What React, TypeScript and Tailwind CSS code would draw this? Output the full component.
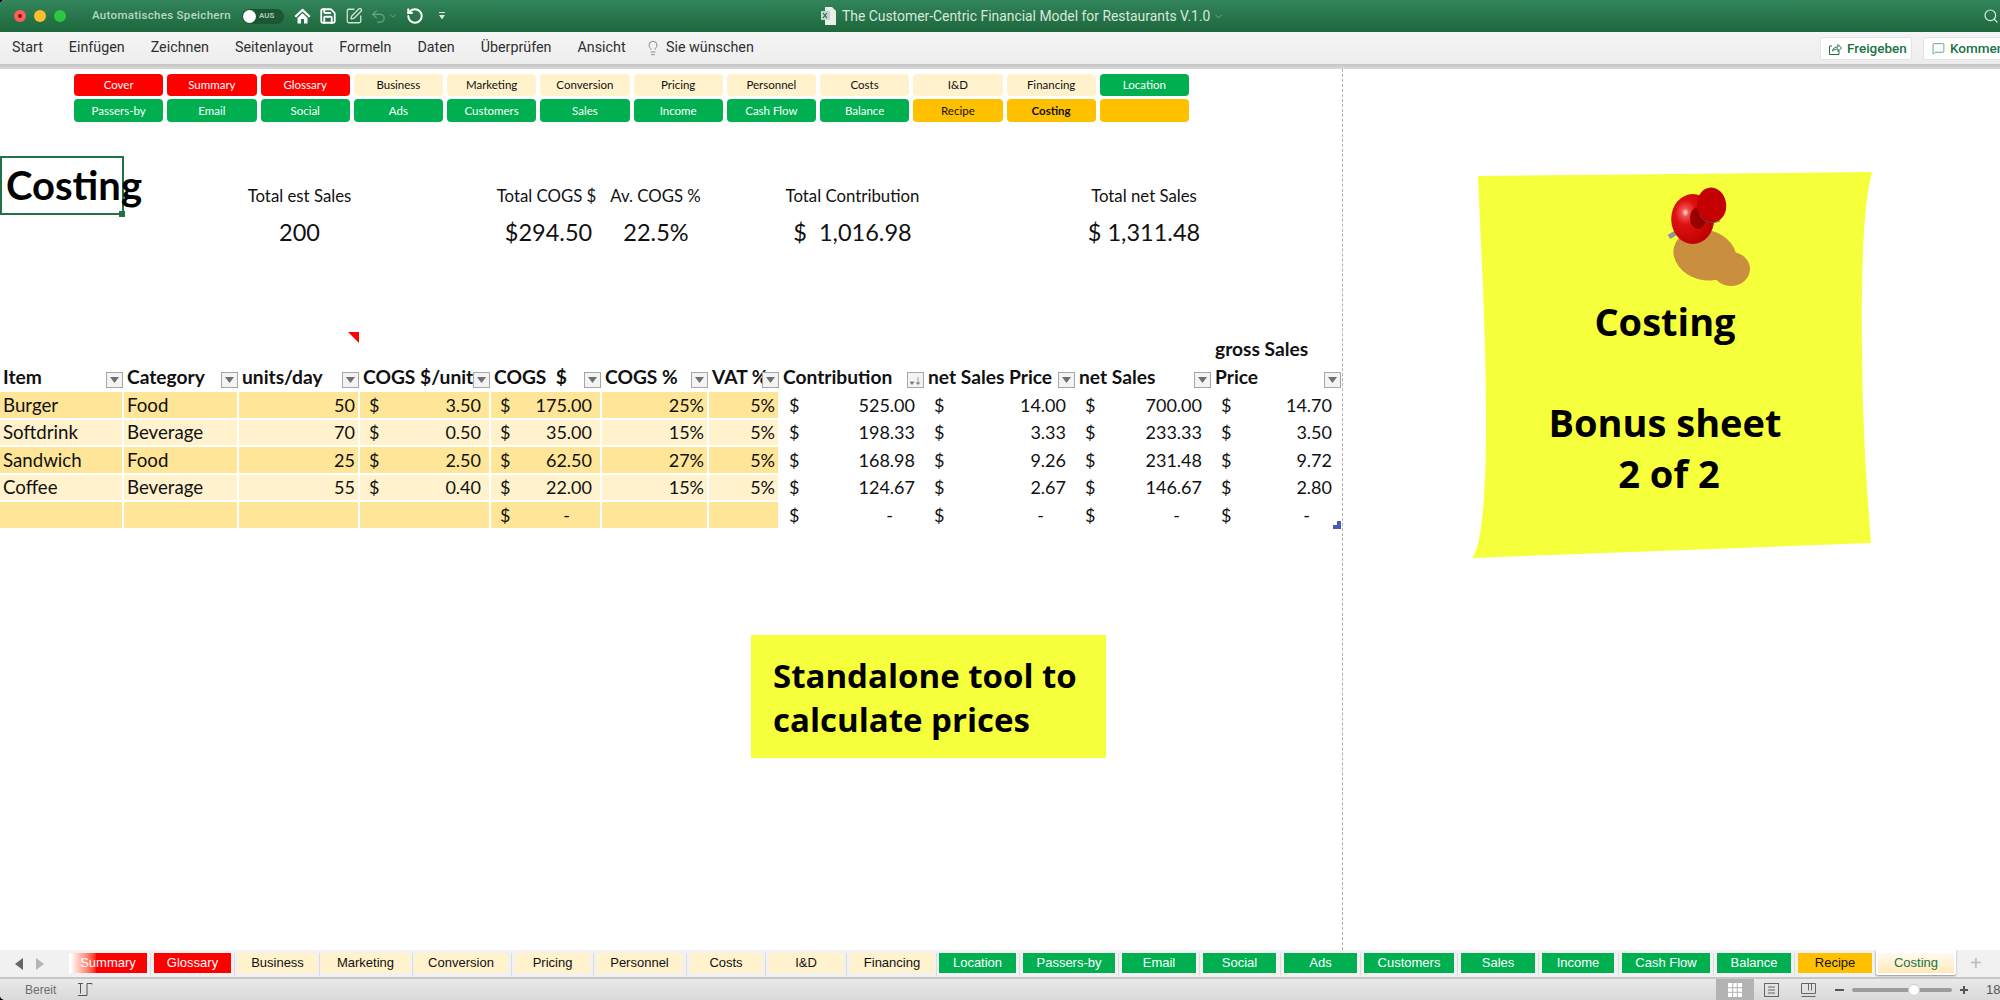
import React from "react";
import { Save, SquarePen, Undo2, RotateCcw, ChevronDown, Lightbulb, Search, MessageSquare } from "lucide-react";

const cols = "grid grid-cols-[124px_115px_121px_131px_111px_107px_71px_145px_151px_136px_130px]";

type Nav = { t: string; c: string };
const navCls = {
  red: "bg-[#ff0000] text-white",
  cream: "bg-[#fff2cc] text-[#111]",
  green: "bg-[#00b050] text-white",
  orange: "bg-[#ffc000] text-[#111]",
};
const nav: Nav[] = [
  { t: "Cover", c: navCls.red }, { t: "Summary", c: navCls.red }, { t: "Glossary", c: navCls.red },
  { t: "Business", c: navCls.cream }, { t: "Marketing", c: navCls.cream }, { t: "Conversion", c: navCls.cream },
  { t: "Pricing", c: navCls.cream }, { t: "Personnel", c: navCls.cream }, { t: "Costs", c: navCls.cream },
  { t: "I&D", c: navCls.cream }, { t: "Financing", c: navCls.cream }, { t: "Location", c: navCls.green },
  { t: "Passers-by", c: navCls.green }, { t: "Email", c: navCls.green }, { t: "Social", c: navCls.green },
  { t: "Ads", c: navCls.green }, { t: "Customers", c: navCls.green }, { t: "Sales", c: navCls.green },
  { t: "Income", c: navCls.green }, { t: "Cash Flow", c: navCls.green }, { t: "Balance", c: navCls.green },
  { t: "Recipe", c: navCls.orange }, { t: "Costing", c: navCls.orange + " font-bold" }, { t: "", c: navCls.orange },
];

const menu = ["Start", "Einfügen", "Zeichnen", "Seitenlayout", "Formeln", "Daten", "Überprüfen", "Ansicht"];

function FilterBtn({ sorted }: { sorted?: boolean }) {
  return (
    <div className="absolute right-px bottom-[4px] flex h-[16px] w-[17px] items-center justify-center border border-[#a6a6a6] bg-[#f3f3f3]">
      {sorted ? (
        <svg width="11" height="9" viewBox="0 0 11 9"><path d="M0 6h4L2 8.5zM8 1v7M6 6.5 8 8.5l2-2" fill="#777" stroke="#777" strokeWidth="0.7" /></svg>
      ) : (
        <svg width="9" height="6" viewBox="0 0 9 6"><path d="M0 0h9L4.5 6z" fill="#6f6f6f" /></svg>
      )}
    </div>
  );
}

const headers = ["Item", "Category", "units/day", "COGS $/unit", "COGS  $", "COGS %", "VAT %", "Contribution", "net Sales Price", "net Sales", "gross Sales Price"];

function Header() {
  return (
    <div className={cols + " h-[54px] grid-rows-[54px] text-[19.2px] font-bold leading-[27.5px] text-[#111]"}>
      {headers.map((h, i) => (
        <div key={h} className="relative flex items-end pb-[2px] pl-[3px]">
          {i === 2 && (
            <svg className="absolute right-px top-[-6px]" width="11" height="11" viewBox="0 0 11 11"><path d="M0 0h11v11z" fill="#ff0000" /></svg>
          )}
          <span className={i === 10 ? "w-[100px]" : "whitespace-pre"}>{h}</span>
          <FilterBtn sorted={i === 7} />
        </div>
      ))}
    </div>
  );
}

type Row = { item: string; cat: string; units: string; unit: string; cogs: string; pct: string; vat: string; con: string; price: string; net: string; gross: string };
const rows: Row[] = [
  { item: "Burger", cat: "Food", units: "50", unit: "3.50", cogs: "175.00", pct: "25%", vat: "5%", con: "525.00", price: "14.00", net: "700.00", gross: "14.70" },
  { item: "Softdrink", cat: "Beverage", units: "70", unit: "0.50", cogs: "35.00", pct: "15%", vat: "5%", con: "198.33", price: "3.33", net: "233.33", gross: "3.50" },
  { item: "Sandwich", cat: "Food", units: "25", unit: "2.50", cogs: "62.50", pct: "27%", vat: "5%", con: "168.98", price: "9.26", net: "231.48", gross: "9.72" },
  { item: "Coffee", cat: "Beverage", units: "55", unit: "0.40", cogs: "22.00", pct: "15%", vat: "5%", con: "124.67", price: "2.67", net: "146.67", gross: "2.80" },
];

function Money({ v, bg }: { v: string; bg?: string }) {
  return (
    <div className={"flex items-center justify-between border-b-2 border-r-2 border-white pl-[9px] pr-[8px] text-[18px] leading-[24px] " + (bg ?? "")}>
      <span>$</span>
      <span>{v}</span>
    </div>
  );
}
function Dash({ bg }: { bg?: string }) {
  return (
    <div className={"flex items-center justify-between border-b-2 border-r-2 border-white pl-[9px] pr-[30px] text-[18px] leading-[24px] " + (bg ?? "")}>
      <span>$</span>
      <span>-</span>
    </div>
  );
}
function Txt({ v, bg, right }: { v: string; bg: string; right?: boolean }) {
  return (
    <div className={"flex items-center border-b-2 border-r-2 border-white leading-[24px] " + (right ? "justify-end pr-[3px] text-[18px] " : "pl-[3px] text-[18.7px] ") + bg}>
      {v}
    </div>
  );
}

function Note() {
  return (
    <div className="relative ml-[129px] mt-[103px] h-[386px] w-[400px] shrink-0">
      <svg className="absolute inset-0" width="400" height="386" viewBox="0 0 400 386">
        <path d="M6 4 L400 0 C392 30 389 90 390 180 C391 270 396 330 399 371 L0 386 C10 375 14 320 14 250 C14 150 8 60 6 4 Z" fill="#f6ff3b" />
      </svg>
      <svg className="absolute left-[178px] top-[3px]" width="110" height="125" viewBox="0 0 110 125">
        <defs>
          <radialGradient id="pinhead" cx="0.33" cy="0.37" r="0.7">
            <stop offset="0" stopColor="#ffe0e0" />
            <stop offset="0.12" stopColor="#f05050" />
            <stop offset="0.35" stopColor="#df1010" />
            <stop offset="1" stopColor="#bb0000" />
          </radialGradient>
        </defs>
        <ellipse cx="55" cy="80" rx="32" ry="25" fill="#c98f3e" transform="rotate(15 55 80)" />
        <ellipse cx="81" cy="94" rx="19" ry="17" fill="#c98f3e" />
        <path d="M19 62 L27 57" stroke="#8c96a0" strokeWidth="5" />
        <ellipse cx="42.7" cy="44" rx="21.5" ry="25" fill="url(#pinhead)" />
        <ellipse cx="48" cy="43" rx="8" ry="11" fill="#9a0000" />
        <ellipse cx="61.7" cy="30" rx="14.5" ry="17.5" fill="#c40000" transform="rotate(-8 61.7 30)" />
        <path d="M50 40 C54 48 62 49 70 46" stroke="#555" strokeWidth="0.8" fill="none" />
      </svg>
      <div className="relative pr-[14px] pt-[124px] text-center font-['Open_Sans',sans-serif] text-[38px] font-bold leading-[50.5px] text-black">
        <div>Costing</div>
        <div className="h-[50.5px]" />
        <div>Bonus sheet</div>
        <div className="pl-[8px]">2 of 2</div>
      </div>
    </div>
  );
}

type Tab = { t: string; cell: string; chip: string; c: string };
const tred = "bg-[#ff0000] text-white";
const tcream = "bg-[#fff2cc] text-[#111]";
const tgreen = "bg-[#00b050] text-white";
const tabs: Tab[] = [
  { t: "Summary", cell: "w-[85px]", chip: "w-[78px]", c: "bg-linear-to-r from-[#ffffff] from-[2%] to-[#ff0000] to-[35%] text-white" },
  { t: "Glossary", cell: "w-[84px]", chip: "w-[77px]", c: tred },
  { t: "Business", cell: "w-[83px]", chip: "w-[79px]", c: tcream },
  { t: "Marketing", cell: "w-[93px]", chip: "w-[89px]", c: tcream },
  { t: "Conversion", cell: "w-[101px]", chip: "w-[94px]", c: tcream },
  { t: "Pricing", cell: "w-[82px]", chip: "w-[75px]", c: tcream },
  { t: "Personnel", cell: "w-[93px]", chip: "w-[85px]", c: tcream },
  { t: "Costs", cell: "w-[79px]", chip: "w-[72px]", c: tcream },
  { t: "I&D", cell: "w-[81px]", chip: "w-[74px]", c: tcream },
  { t: "Financing", cell: "w-[89px]", chip: "w-[84px]", c: tcream },
  { t: "Location", cell: "w-[84px]", chip: "w-[77px]", c: tgreen },
  { t: "Passers-by", cell: "w-[99px]", chip: "w-[92px]", c: tgreen },
  { t: "Email", cell: "w-[81px]", chip: "w-[74px]", c: tgreen },
  { t: "Social", cell: "w-[81px]", chip: "w-[73px]", c: tgreen },
  { t: "Ads", cell: "w-[80px]", chip: "w-[73px]", c: tgreen },
  { t: "Customers", cell: "w-[97px]", chip: "w-[90px]", c: tgreen },
  { t: "Sales", cell: "w-[81px]", chip: "w-[74px]", c: tgreen },
  { t: "Income", cell: "w-[80px]", chip: "w-[72px]", c: tgreen },
  { t: "Cash Flow", cell: "w-[95px]", chip: "w-[88px]", c: tgreen },
  { t: "Balance", cell: "w-[81px]", chip: "w-[74px]", c: tgreen },
  { t: "Recipe", cell: "w-[80px]", chip: "w-[74px]", c: "bg-[#ffc000] text-[#111]" },
];

export default function App() {
  const yellowA = "bg-[#ffe598]";
  const yellowB = "bg-[#fff2cc]";
  return (
    <div className="h-[1000px] w-[2000px] overflow-hidden bg-black">
      <div className="flex h-full w-full flex-col overflow-hidden rounded-l-[5px] bg-white">
        {/* title bar */}
        <div className="relative flex h-[32px] shrink-0 items-center bg-linear-to-b from-[#32855b] to-[#1e673c] pl-[14px] font-['Roboto',sans-serif]">
          <div className="flex items-center gap-[8px]">
            <div className="flex h-[12px] w-[12px] items-center justify-center rounded-full bg-[#fb5f57]"><div className="h-[4px] w-[4px] rounded-full bg-[#7e1a14]" /></div>
            <div className="h-[12px] w-[12px] rounded-full bg-[#fdbb2e]" />
            <div className="h-[12px] w-[12px] rounded-full bg-[#2ac83f]" />
          </div>
          <span className="ml-[26px] w-[140px] whitespace-nowrap text-[11.5px] font-medium tracking-[0.3px] text-[#b9d6c5]">Automatisches Speichern</span>
          <div className="ml-[10px] flex h-[15px] w-[42px] items-center rounded-full bg-[#1b5733] pl-px">
            <div className="h-[13px] w-[13px] rounded-full bg-white" />
            <span className="ml-[3px] text-[8px] font-bold text-[#a9c9b6]">AUS</span>
          </div>
          <svg className="ml-[10px]" width="17" height="16" viewBox="0 0 17 16"><path d="M8.5 0.5 L0.5 8 L2 9.5 L8.5 3.4 L15 9.5 L16.5 8 Z M3.5 10 L8.5 5.3 L13.5 10 V15.5 H10 V11 H7 V15.5 H3.5 Z" fill="#fff" /></svg>
          <Save className="ml-[8px] text-white" size={18} strokeWidth={2.4} />
          <SquarePen className="ml-[8px] text-[#d6e5dc]" size={18} strokeWidth={1.7} />
          <Undo2 className="ml-[7px] text-[#6fa487]" size={17} strokeWidth={1.7} />
          <ChevronDown className="ml-[1px] text-[#6fa487]" size={10} />
          <RotateCcw className="ml-[8px] text-white" size={18} strokeWidth={2.6} />
          <svg className="ml-[15px]" width="6" height="8" viewBox="0 0 6 8"><path d="M0 0.5h6" stroke="#d9e7de" strokeWidth="1.2" /><path d="M0 3h6L3 7.5z" fill="#d9e7de" /></svg>
          <div className="absolute left-[821px] top-0 flex h-full items-center">
            <svg width="15" height="18" viewBox="0 0 15 18"><path d="M4 0h7l4 4v14H4z" fill="#e8efe9" /><rect x="0" y="4" width="9" height="9" fill="#c3d6ca" /><path d="M2 6l4 5M6 6l-4 5" stroke="#1e673c" strokeWidth="1.1" /></svg>
            <span className="ml-[6px] whitespace-nowrap text-[13.9px] text-[#d8e7de]">The Customer-Centric Financial Model for Restaurants V.1.0</span>
            <ChevronDown className="ml-[3px] text-[#7fae94]" size={11} />
          </div>
          <Search className="absolute left-[1983px] top-[8px] text-[#dfeae3]" size={16} strokeWidth={1.8} />
        </div>
        {/* ribbon */}
        <div className="flex h-[32px] shrink-0 items-center overflow-hidden bg-linear-to-b from-[#f5f5f5] to-[#ededed] pl-[12px] font-['Roboto',sans-serif] text-[14.3px] text-[#2f2f2f]">
          <div className="flex w-[614px] shrink-0 items-center gap-[26px]">
            {menu.map((m) => (
              <span key={m} className="whitespace-nowrap">{m}</span>
            ))}
          </div>
          <Lightbulb className="ml-[19px] shrink-0 text-[#666]" size={16} strokeWidth={1.1} />
          <span className="ml-[5px] whitespace-nowrap">Sie wünschen</span>
          <div className="ml-auto flex h-[23px] w-[92px] shrink-0 items-center rounded-[2px] border border-[#e3e3e3] bg-white pl-[8px] text-[13.5px] font-medium text-[#217346]">
            <svg width="13" height="13" viewBox="0 0 13 13" fill="none" stroke="#217346" strokeWidth="1"><path d="M3 4H0.5v8.5H10V9" /><path d="M3.5 9C4 6 6 5 9 5V2.5L12.5 6 9 9.5V7C7 7 5 7.5 3.5 9Z" /></svg>
            <span className="ml-[5px]">Freigeben</span>
          </div>
          <div className="ml-[11px] flex h-[23px] w-[77px] shrink-0 items-center overflow-hidden rounded-l-[2px] border border-r-0 border-[#e3e3e3] bg-white pl-[8px] text-[13.5px] font-medium text-[#217346]">
            <MessageSquare className="shrink-0" size={13} strokeWidth={1.2} />
            <span className="ml-[5px] whitespace-nowrap">Kommen</span>
          </div>
        </div>
        <div className="h-[5px] shrink-0 bg-linear-to-b from-[#c4c4c4] to-[#d9d9d9]" />

        {/* sheet */}
        <div className="flex min-h-0 flex-1 bg-white">
          <div className="w-[1343px] shrink-0 border-r border-dashed border-[#b0b0b0] font-['Lato',sans-serif] text-[#111]">
            <div className="grid grid-cols-[repeat(12,89.25px)] grid-rows-[22px_23px] gap-x-[4px] gap-y-[3px] pl-[74px] pt-[5px] text-[11.5px]">
              {nav.map((n, i) => (
                <div key={i} className={"flex items-center justify-center rounded-[4px] " + n.c}>{n.t}</div>
              ))}
            </div>
            <div className={cols + " mt-[34px] grid-rows-[51px_52px] text-[16.8px]"}>
              <div className="relative row-span-2 h-[59px] border-2 border-[#217346]">
                <span className="absolute left-[4px] top-[2px] whitespace-nowrap text-[40px] font-bold leading-[50px] text-black">Costing</span>
                <div className="absolute -bottom-[4px] -right-[3px] h-[6px] w-[6px] bg-[#217346]" />
              </div>
              <div />
              <div className="flex items-end justify-center whitespace-nowrap leading-[22px]">Total est Sales</div>
              <div />
              <div className="flex items-end justify-center whitespace-nowrap leading-[22px]">Total COGS $</div>
              <div className="flex items-end justify-center whitespace-nowrap leading-[22px]">Av. COGS %</div>
              <div />
              <div className="flex items-end justify-center whitespace-nowrap leading-[22px]">Total Contribution</div>
              <div />
              <div className="flex items-end justify-center whitespace-nowrap leading-[22px]">Total net Sales</div>
              <div />
              <div />
              <div className="flex items-center justify-center text-[23.5px]">200</div>
              <div />
              <div className="flex items-center justify-center whitespace-nowrap pl-[4px] text-[23.5px]">$294.50</div>
              <div className="flex items-center justify-center whitespace-nowrap pl-[1px] text-[23.5px]">22.5%</div>
              <div />
              <div className="flex items-center justify-center whitespace-pre text-[23.5px]">{"$  1,016.98"}</div>
              <div />
              <div className="flex items-center justify-center whitespace-nowrap text-[23.5px]">$ 1,311.48</div>
              <div />
            </div>
            <div className="mt-[79px]">
              <Header />
              <div className="text-[#111]">
                {rows.map((r, i) => {
                  const bg = i % 2 === 0 ? yellowA : yellowB;
                  return (
                    <div key={r.item} className={cols + " h-[27.5px]"}>
                      <Txt v={r.item} bg={bg} />
                      <Txt v={r.cat} bg={bg} />
                      <Txt v={r.units} bg={bg} right />
                      <Money v={r.unit} bg={bg} />
                      <Money v={r.cogs} bg={bg} />
                      <Txt v={r.pct} bg={bg + " pr-[2px]"} right />
                      <Txt v={r.vat} bg={bg + " pr-[2px]"} right />
                      <Money v={r.con} />
                      <Money v={r.price} />
                      <Money v={r.net} />
                      <Money v={r.gross} />
                    </div>
                  );
                })}
                <div className={cols + " relative h-[27.5px]"}>
                  <Txt v="" bg={yellowA} />
                  <Txt v="" bg={yellowA} />
                  <Txt v="" bg={yellowA} />
                  <Txt v="" bg={yellowA} />
                  <Dash bg={yellowA} />
                  <Txt v="" bg={yellowA} />
                  <Txt v="" bg={yellowA} />
                  <Dash />
                  <Dash />
                  <Dash />
                  <Dash />
                  <svg className="absolute bottom-[1px] right-[1px]" width="8" height="8" viewBox="0 0 8 8"><path d="M8 0v8H0V4h4V0z" fill="#4a5cb5" /></svg>
                </div>
              </div>
            </div>
            <div className="ml-[751px] mt-[105px] h-[123px] w-[355px] bg-[#f6ff3b] pl-[22px] pt-[19px] font-['Open_Sans',sans-serif] text-[33px] font-bold leading-[44px] text-black">
              <div className="whitespace-nowrap">Standalone tool to</div>
              <div className="whitespace-nowrap">calculate prices</div>
            </div>
          </div>
          <Note />
        </div>

        {/* tabs */}
        <div className="flex h-[27px] shrink-0 bg-[#f1f1f1] font-['Liberation_Sans',Arial,sans-serif] text-[13px]">
          <div className="flex w-[69px] shrink-0 items-center pl-[15px]">
            <svg width="9" height="12" viewBox="0 0 9 12"><path d="M8 0v12L0 6z" fill="#666" /></svg>
            <svg className="ml-[11px]" width="9" height="12" viewBox="0 0 9 12"><path d="M1 0v12l8-6z" fill="#b5b5b5" /></svg>
          </div>
          {tabs.map((t) => (
            <div key={t.t} className={"flex shrink-0 pt-[3px] " + t.cell}>
              <div className={"flex h-[20px] shrink-0 items-center justify-center " + t.chip + " " + t.c}>{t.t}</div>
              <div className="flex flex-1 justify-center"><div className="h-[23px] w-px bg-[#dcdcdc]" /></div>
            </div>
          ))}
          <div className="-ml-[2px] flex h-[25px] w-[80px] shrink-0 items-center justify-center rounded-b-[2px] bg-white shadow-[0_1px_2px_rgba(0,0,0,0.4)]">
            <div className="flex h-[20px] w-[76px] items-center justify-center bg-linear-to-b from-[#fffaf0] to-[#ffe9b8] font-medium text-[#217346]">Costing</div>
          </div>
          <span className="ml-[14px] text-[20px] leading-[26px] text-[#b9b9b9]">+</span>
        </div>

        {/* status */}
        <div className="flex h-[23px] shrink-0 items-center border-t-2 border-[#c6c6c6] bg-linear-to-b from-[#e9e9e9] to-[#d9d9d9] pl-[25px] font-['Liberation_Sans',Arial,sans-serif] text-[12px] text-[#6e6e6e]">
          <span>Bereit</span>
          <svg className="ml-[22px]" width="15" height="15" viewBox="0 0 15 15" fill="none" stroke="#555" strokeWidth="1"><path d="M0 1.5h5M2.5 1.5v10M0 13.5h6M9 1.5h5v1M9 1.5v12H6" /></svg>
          <div className="ml-auto flex h-full w-[38px] items-center justify-center bg-[#b3b3b3]">
            <svg width="14" height="14" viewBox="0 0 14 14"><path d="M0 0h14v14H0z" fill="#fff" /><path d="M4.7 0v14M9.3 0v14M0 4.7h14M0 9.3h14" stroke="#b3b3b3" strokeWidth="1" /></svg>
          </div>
          <svg className="ml-[10px]" width="15" height="14" viewBox="0 0 15 14" fill="none" stroke="#666" strokeWidth="1"><rect x="0.5" y="0.5" width="14" height="13" /><path d="M4 4h7M4 7h7M4 10h7" /></svg>
          <svg className="ml-[22px]" width="15" height="14" viewBox="0 0 15 14" fill="none" stroke="#666" strokeWidth="1"><path d="M0.5 0.5h14v10h-14zM7.5 0.5v7M10.5 .5v7M0.5 13.5h14" /></svg>
          <div className="ml-[19px] h-[2px] w-[9px] bg-[#555]" />
          <div className="relative ml-[8px] h-[4px] w-[100px] rounded-full bg-[#9c9c9c]">
            <div className="absolute left-[56px] top-[-4px] h-[12px] w-[12px] rounded-full border border-[#ccc] bg-white" />
          </div>
          <div className="relative ml-[8px] h-[8px] w-[8px]">
            <div className="absolute left-0 top-[3px] h-[2px] w-[8px] bg-[#555]" />
            <div className="absolute left-[3px] top-0 h-[8px] w-[2px] bg-[#555]" />
          </div>
          <span className="ml-[18px] mr-0 w-[14px] overflow-hidden text-[13px] text-[#555]">18</span>
        </div>
      </div>
    </div>
  );
}
